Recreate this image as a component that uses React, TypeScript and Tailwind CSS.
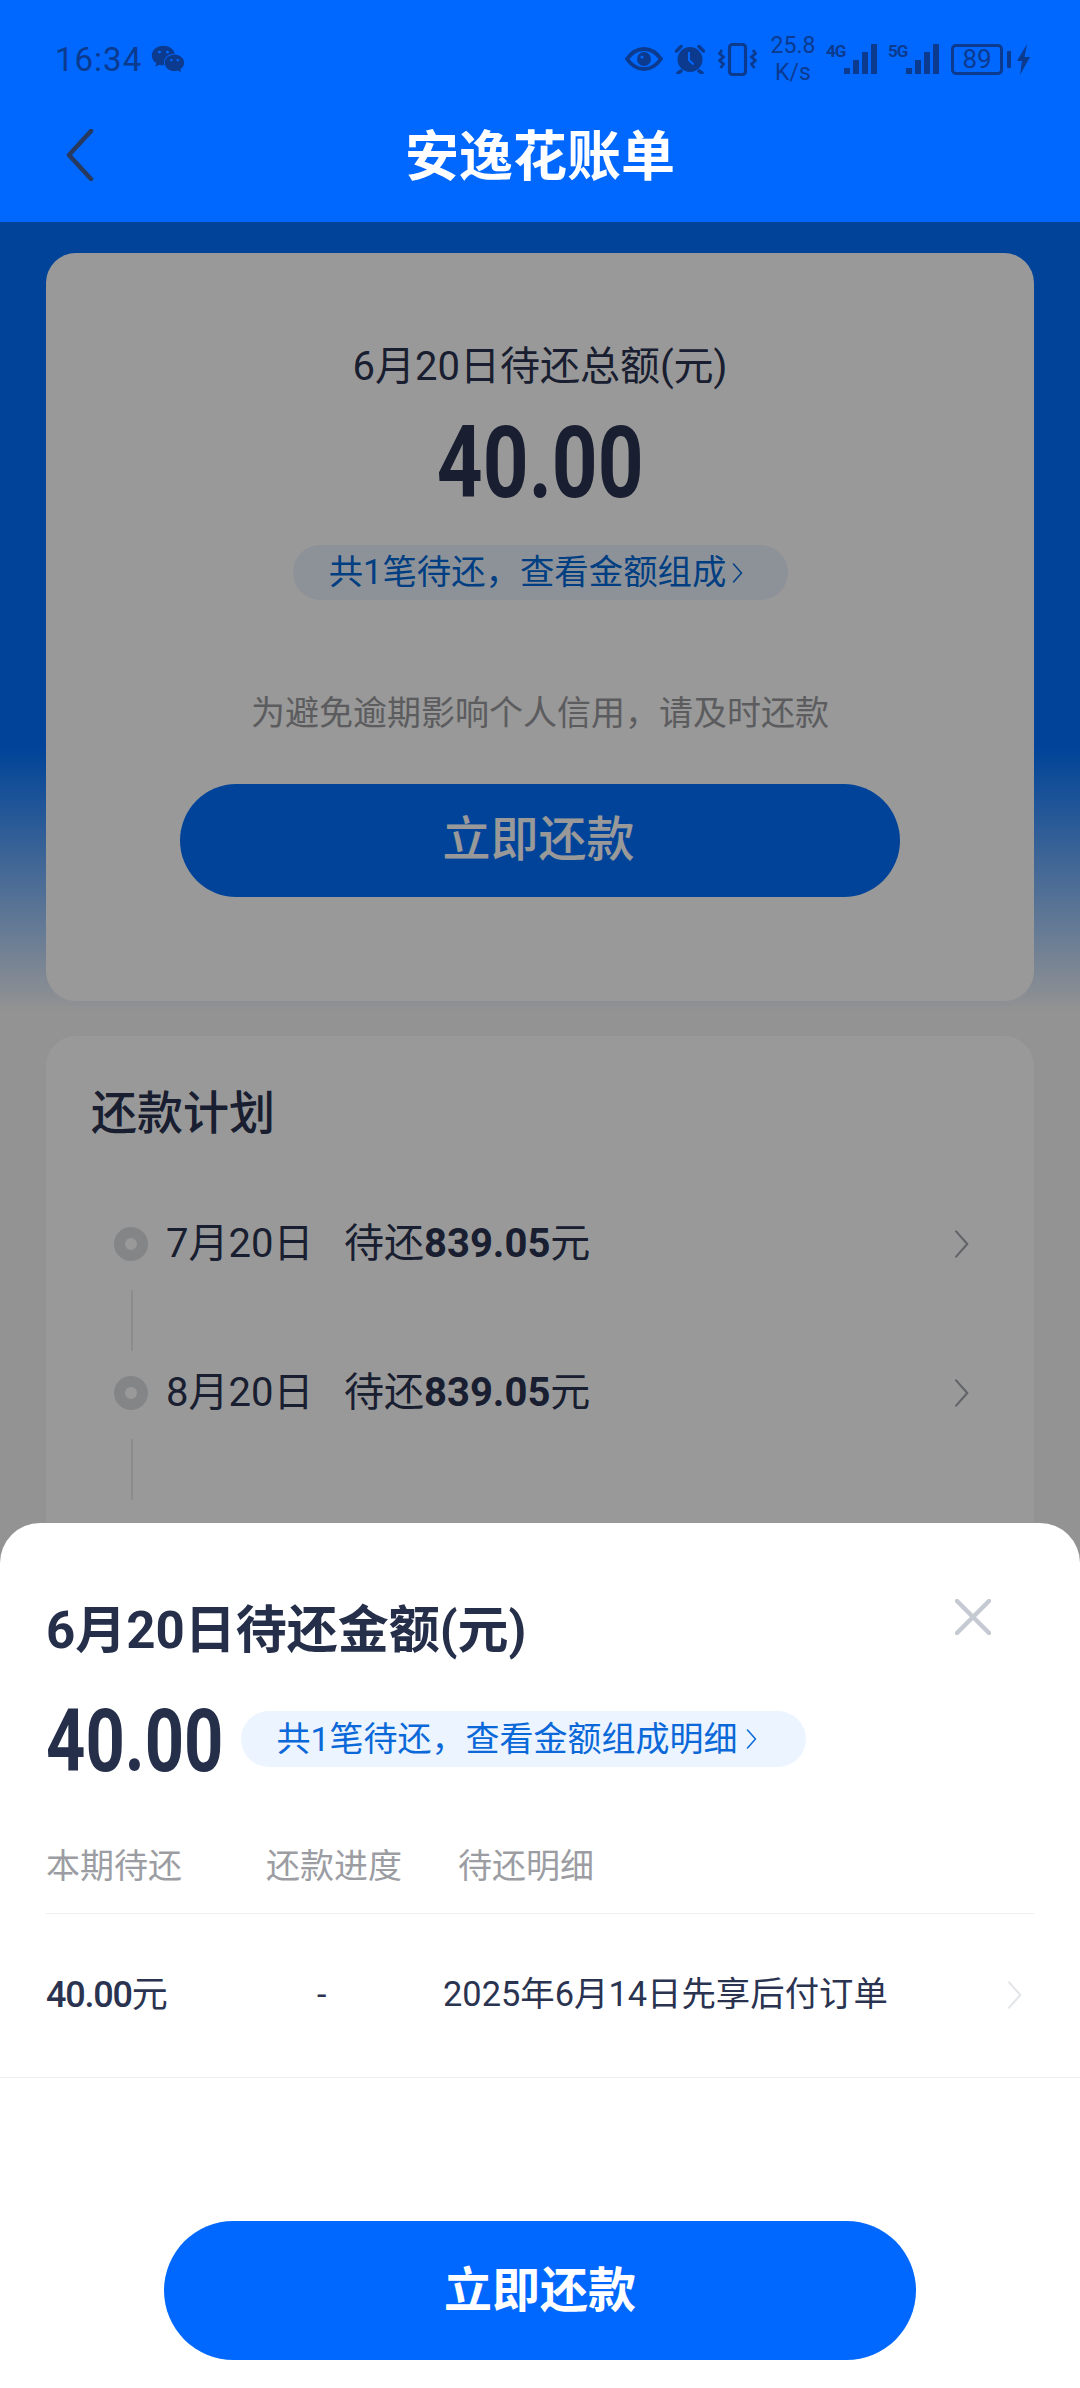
import { FaWeixin } from "react-icons/fa";

const cjk = "font-['Roboto','Noto_Sans_CJK_SC',sans-serif]";
const statusColor = "#0b3a8f";

function EyeIcon() {
  return (
    <svg width="38" height="24" viewBox="0 0 38 24" fill="none">
      <path d="M2 12C7 5 12 2 19 2s12 3 17 10c-5 7-10 10-17 10S7 19 2 12Z" stroke={statusColor} strokeWidth="3.8" />
      <circle cx="19" cy="12" r="7" fill={statusColor} />
      <circle cx="17" cy="10" r="1.6" fill="#0068ff" />
    </svg>
  );
}

function AlarmIcon() {
  return (
    <svg width="30" height="30" viewBox="0 0 30 30" fill="none">
      <circle cx="15" cy="15.5" r="12.5" fill={statusColor} />
      <path d="M1.500 7 6 2.500M28.500 7 24 2.500M6 27l-3 2M24 27l3 2" stroke={statusColor} strokeWidth="3.400" strokeLinecap="round" />
      <path d="M14 8v8l4.500 4.500" stroke="#0068ff" strokeWidth="2" />
    </svg>
  );
}

function VibrateIcon() {
  return (
    <svg width="39" height="33" viewBox="0 0 39 33" fill="none" stroke={statusColor}>
      <rect x="11.5" y="1.5" width="16" height="30" rx="3" strokeWidth="3.200" />
      <path d="M4 7 1.500 10.500 5.500 14 1.500 17.500 5.500 21 2.500 25" strokeWidth="2.800" />
      <path d="M35 7l2.500 3.500-4 3.500 4 3.500-4 3.500 3 4" strokeWidth="2.800" />
    </svg>
  );
}

function SignalBars() {
  return (
    <svg width="33" height="30" viewBox="0 0 33 30" fill={statusColor}>
      <rect x="0" y="24" width="6" height="6" />
      <rect x="9" y="16" width="6" height="14" />
      <rect x="18" y="8" width="6" height="22" />
      <rect x="27" y="0" width="6" height="30" />
    </svg>
  );
}

function Bolt() {
  return (
    <svg width="13" height="31" viewBox="0 0 13 31" fill={statusColor}>
      <path d="M10 0 0 17h5L3 31l10-18H7.500L10 0Z" />
    </svg>
  );
}

function Chevron({ color, h = 28 }: { color: string; h?: number }) {
  return (
    <svg width={h * 0.55} height={h} viewBox="0 0 11 20" fill="none">
      <path d="M1.500 1 9.500 10l-8 9" stroke={color} strokeWidth="1.500" strokeLinecap="round" strokeLinejoin="round" />
    </svg>
  );
}

function StatusBar() {
  return (
    <div className="flex h-[118px] items-center pl-[55px] pr-[50px] text-[#0b3a8f]">
      <span className="text-[33px] leading-none tracking-[1px] font-['Roboto',sans-serif]">16:34</span>
      <FaWeixin className="ml-[9px] h-[34px] w-[34px]" />
      <div className="ml-auto flex items-center">
        <EyeIcon />
        <div className="ml-[12px]"><AlarmIcon /></div>
        <div className="ml-[13px]"><VibrateIcon /></div>
        <div className="ml-[10px] flex w-[52px] flex-col items-center text-[23px] leading-[27px] font-['Roboto',sans-serif]">
          <span>25.8</span>
          <span>K/s</span>
        </div>
        <div className="ml-[7px] mb-[16px] w-[18px] text-[17px] font-bold leading-none tracking-[-1px] font-['Roboto',sans-serif]">4G</div>
        <SignalBars />
        <div className="ml-[11px] mb-[16px] w-[18px] text-[17px] font-bold leading-none tracking-[-1px] font-['Roboto',sans-serif]">5G</div>
        <SignalBars />
        <div className="ml-[12px] flex h-[31px] w-[52px] items-center justify-center rounded-[5px] border-[3px] border-[#0b3a8f] text-[26px] leading-none font-['Roboto',sans-serif]">
          89
        </div>
        <div className="ml-[4px] h-[17px] w-[4px] rounded-[1px] bg-[#0b3a8f]" />
        <div className="ml-[6px]"><Bolt /></div>
      </div>
    </div>
  );
}

function PlanRow({ date, amount }: { date: string; amount: string }) {
  return (
    <div>
      <div className="flex h-[50px] items-center justify-between">
        <div className="flex items-center text-[40px] text-[#2a3350]">
          <div className="ml-[23px] mr-[18px] h-[34px] w-[34px] rounded-full border-[11px] border-[#dcdee2]" />
          <span className="w-[178px]">{date}</span>
          <span>
            待还<span className="font-bold">{amount}</span>元
          </span>
        </div>
        <Chevron color="#a2a5ad" />
      </div>
      <div className="ml-[40px] mb-[17px] mt-[21px] h-[61px] w-[2px] bg-[#e8e9eb]" />
    </div>
  );
}

export default function App() {
  return (
    <div className={"relative h-[2388px] w-[1080px] overflow-hidden bg-[#f5f5f5] " + cjk}>
      <div className="relative z-10 h-[222px] bg-[#0068ff]">
        <StatusBar />
        <div className="relative flex h-[80px] items-center justify-center">
          <svg className="absolute left-[66px] top-[11px]" width="28" height="52" viewBox="0 0 28 52" fill="none">
            <path d="M25 2 3 26l22 24" stroke="#28395f" strokeWidth="4.500" strokeLinecap="round" strokeLinejoin="round" />
          </svg>
          <span className="text-[54px] font-bold leading-none text-white">安逸花账单</span>
        </div>
      </div>

      <div className="bg-[linear-gradient(#0071ff_0,#0071ff_525px,#f5f5f5_790px)] px-[46px] pt-[31px]">
        <div className="flex flex-col items-center rounded-[30px] bg-white pb-[104px] pt-[89px]">
          <div className="text-[40px] leading-[50px] text-[#2a3350]">6月20日待还总额(元)</div>
          <div className="mt-[16px] scale-x-[0.8] text-[100px] font-bold leading-[110px] text-[#2a3350]">40.00</div>
          <div className="mt-[27px] flex h-[55px] w-[495px] items-center justify-center gap-[6px] rounded-full bg-[#ebf4ff] pr-[8px] text-[34.4px] text-[#0068d9]">
            共1笔待还，查看金额组成
            <Chevron color="#0068d9" h={20} />
          </div>
          <div className="mt-[88px] text-[34px] leading-[50px] text-[#999a9e]">为避免逾期影响个人信用，请及时还款</div>
          <div className="mt-[46px] flex h-[113px] w-[720px] items-center justify-center rounded-full bg-[#0071ff] pb-[2px] pr-[3px] text-[48px] font-medium text-white">
            立即还款
          </div>
        </div>

        <div className="mt-[35px] rounded-[30px] bg-white px-[45px] pb-[200px] pt-[47px]">
          <div className="text-[46px] font-medium leading-[60px] text-[#2a3350]">还款计划</div>
          <div className="mt-[76px] pr-[20px]">
            <PlanRow date="7月20日" amount="839.05" />
            <PlanRow date="8月20日" amount="839.05" />
          </div>
        </div>
      </div>

      <div className="absolute inset-0 z-0 bg-black/40" />

      <div className="absolute inset-x-0 bottom-0 z-20 h-[865px] rounded-t-[40px] bg-white pt-[78px]">
        <svg className="absolute left-[955px] top-[76px]" width="36" height="36" viewBox="0 0 36 36" fill="none">
          <path d="M2 2l32 32M34 2 2 34" stroke="#c5c9d1" strokeWidth="4.500" strokeLinecap="round" />
        </svg>
        <div className="px-[46px]">
          <div className="text-[51px] font-bold leading-[60px] text-[#252f4a]">6月20日待还金额(元)</div>
          <div className="mt-[22px] flex h-[110px] items-center">
            <div className="mt-[5px] w-[195px] origin-left scale-x-[0.78] whitespace-nowrap text-[88px] font-bold leading-none text-[#252f4a]">40.00</div>
            <div className="mt-[2px] flex h-[56px] w-[565px] items-center justify-center gap-[8px] rounded-full bg-[#ebf4ff] pr-[14px] text-[34px] text-[#0a68d8]">
              共1笔待还，查看金额组成明细
              <Chevron color="#0a68d8" h={20} />
            </div>
          </div>
          <div className="mt-[48px] flex border-b border-[#eeeeee] pb-[22px] text-[34px] leading-[50px] text-[#9b9da3]">
            <span className="w-[220px]">本期待还</span>
            <span className="w-[192px]">还款进度</span>
            <span>待还明细</span>
          </div>
        </div>
        <div className="flex h-[164px] items-center border-b border-[#eeeeee] pb-[2px] pl-[46px] pr-[58px] text-[#2a3350]">
          <span className="w-[271px] text-[36px]">
            <span className="font-medium tracking-[-1.2px]">40.00</span>元
          </span>
          <span className="w-[126px] text-[34px]">-</span>
          <span className="text-[34.4px]">2025年6月14日先享后付订单</span>
          <div className="ml-auto">
            <Chevron color="#e3e5e8" />
          </div>
        </div>
        <div className="mx-auto mt-[143px] flex h-[139px] w-[752px] items-center justify-center rounded-full bg-[#0068ff] text-[48px] font-bold text-white">
          立即还款
        </div>
      </div>
    </div>
  );
}
